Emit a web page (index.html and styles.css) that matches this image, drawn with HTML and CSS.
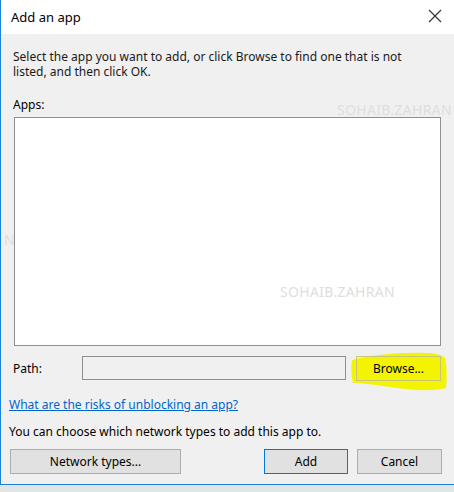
FILE: index.html
```html
<!DOCTYPE html>
<html>
<head>
<meta charset="utf-8">
<link rel="stylesheet" href="styles.css">
</head>
<body>
<div class="window">
  <div class="titlebar">
    <span class="title">Add an app</span>
    <svg class="close" width="14" height="14" viewBox="0 0 14 14"><path d="M1 1L13 13M13 1L1 13" stroke="#333" stroke-width="1.2" fill="none"/></svg>
  </div>
  <div class="content">
    <p class="desc">Select the app you want to add, or click Browse to find one that is not listed, and then click OK.</p>
    <div class="apps-label">Apps:</div>
    <div class="listbox"></div>
    <div class="path-row">
      <span class="path-label">Path:</span>
      <div class="path-input"></div>
      <div class="browse-wrap">
        <svg class="highlight" width="100" height="42" viewBox="0 0 100 42"><path d="M2 8 C20 3 50 0 75 1 C85 1 92 3 95 6 C97 14 97 26 96 36 C80 40 60 38 40 35 C25 33 12 31 3 31 C1 22 1 14 2 8 Z" fill="#f4f400"/></svg>
        <div class="btn browse">Browse...</div>
      </div>
    </div>
    <a class="link" href="#">What are the risks of unblocking an app?</a>
    <p class="note">You can choose which network types to add this app to.</p>
    <div class="btn-row">
      <div class="btn network">Network types...</div>
      <div class="btn add">Add</div>
      <div class="btn cancel">Cancel</div>
    </div>
  </div>
  <span class="wm wm1">SOHAIB.ZAHRAN</span>
  <span class="wm wm2">SOHAIB.ZAHRAN</span>
  <span class="wm wm3">N</span>
</div>
</body>
</html>
```

FILE: styles.css
```css
html, body {
  margin: 0;
  padding: 0;
}
body {
  width: 454px;
  height: 492px;
  background: #e4e4e4;
  font-family: "Noto Sans", "Open Sans", sans-serif;
  font-size: 12px;
  color: #000;
  overflow: hidden;
}
.window {
  position: relative;
  width: 453px;
  height: 484px;
  border-left: 1px solid #1a82d8;
  border-bottom: 1px solid #1a82d8;
  background: #f0f0f0;
  overflow: hidden;
}
.titlebar {
  height: 34px;
  background: #fff;
  display: flex;
  align-items: center;
  justify-content: space-between;
  padding: 0 12px 0 10px;
}
.title {
  font-size: 13px;
  color: #000;
  margin-top: -1px;
}
.close {
  margin-top: -2px;
}
.content {
  padding: 15px 12px 0 7px;
}
.desc {
  margin: 0 0 0 5px;
  line-height: 15px;
  width: 400px;
  color: #1a1a1a;
}
.apps-label {
  margin: 18px 0 0 5px;
  line-height: 15px;
}
.listbox {
  margin: 5px 0 0 6px;
  width: 425px;
  height: 227px;
  background: #fff;
  border: 1px solid #8c8f96;
}
.path-row {
  display: flex;
  align-items: center;
  margin-top: 9px;
  height: 26px;
}
.path-label {
  width: 69px;
  margin-left: 5px;
}
.path-input {
  width: 262px;
  height: 22px;
  background: #f0f0f0;
  border: 1px solid #8f8f8f;
}
.browse-wrap {
  position: relative;
  margin-left: 10px;
}
.highlight {
  position: absolute;
  left: -6px;
  top: -4px;
}
.btn {
  box-sizing: border-box;
  height: 25px;
  display: flex;
  align-items: center;
  justify-content: center;
  background: #e1e1e1;
  border: 1px solid #adadad;
  color: #000;
}
.browse {
  position: relative;
  width: 85px;
  background: transparent;
  border-color: #c7c77a;
}
.link {
  display: block;
  margin: 16px 0 0 1px;
  color: #0066cc;
  text-decoration: underline;
  line-height: 15px;
}
.note {
  margin: 12px 0 0 1px;
  line-height: 15px;
}
.btn-row {
  display: flex;
  margin-top: 10px;
  margin-left: 2px;
}
.network {
  width: 173px;
}
.add {
  width: 85px;
  margin-left: 83px;
  border: 1px solid #0078d7;
}
.cancel {
  width: 86px;
  margin-left: 9px;
}
.wm {
  position: absolute;
  color: #dedede;
  font-size: 14px;
  letter-spacing: 0.3px;
}
.wm1 { left: 336px; top: 100px; }
.wm2 { left: 279px; top: 282px; }
.wm3 { left: 3px; top: 230px; }
```
